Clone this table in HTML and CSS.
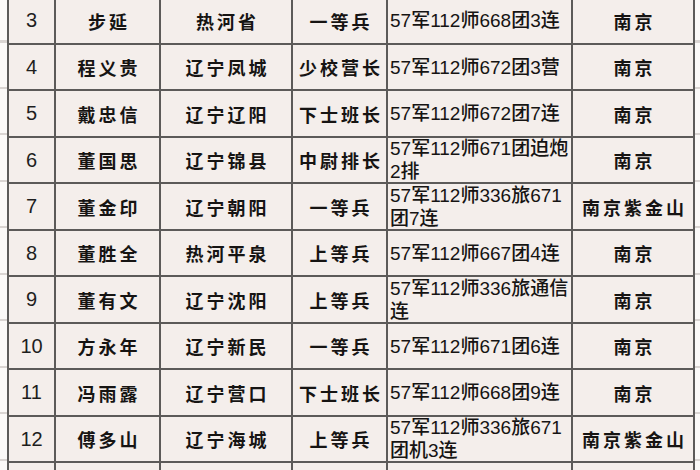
FILE: index.html
```html
<!DOCTYPE html>
<html lang="zh-CN">
<head>
<meta charset="utf-8">
<title>名单</title>
<link rel="stylesheet" href="styles.css">
</head>
<body>
<div class="sheet">
  <div class="roster">
    <div class="cell num">3</div><div class="cell">步延</div><div class="cell">热河省</div><div class="cell">一等兵</div><div class="cell unit">57军112师668团3连</div><div class="cell">南京</div>
    <div class="cell num">4</div><div class="cell">程义贵</div><div class="cell">辽宁凤城</div><div class="cell">少校营长</div><div class="cell unit">57军112师672团3营</div><div class="cell">南京</div>
    <div class="cell num">5</div><div class="cell">戴忠信</div><div class="cell">辽宁辽阳</div><div class="cell">下士班长</div><div class="cell unit">57军112师672团7连</div><div class="cell">南京</div>
    <div class="cell num">6</div><div class="cell">董国思</div><div class="cell">辽宁锦县</div><div class="cell">中尉排长</div><div class="cell unit">57军112师671团迫炮<br>2排</div><div class="cell">南京</div>
    <div class="cell num">7</div><div class="cell">董金印</div><div class="cell">辽宁朝阳</div><div class="cell">一等兵</div><div class="cell unit">57军112师336旅671<br>团7连</div><div class="cell">南京紫金山</div>
    <div class="cell num">8</div><div class="cell">董胜全</div><div class="cell">热河平泉</div><div class="cell">上等兵</div><div class="cell unit">57军112师667团4连</div><div class="cell">南京</div>
    <div class="cell num">9</div><div class="cell">董有文</div><div class="cell">辽宁沈阳</div><div class="cell">上等兵</div><div class="cell unit">57军112师336旅通信<br>连</div><div class="cell">南京</div>
    <div class="cell num">10</div><div class="cell">方永年</div><div class="cell">辽宁新民</div><div class="cell">一等兵</div><div class="cell unit">57军112师671团6连</div><div class="cell">南京</div>
    <div class="cell num">11</div><div class="cell">冯雨露</div><div class="cell">辽宁营口</div><div class="cell">下士班长</div><div class="cell unit">57军112师668团9连</div><div class="cell">南京</div>
    <div class="cell num">12</div><div class="cell">傅多山</div><div class="cell">辽宁海城</div><div class="cell">上等兵</div><div class="cell unit">57军112师336旅671<br>团机3连</div><div class="cell">南京紫金山</div>
    <div class="cell num"></div><div class="cell"></div><div class="cell"></div><div class="cell"></div><div class="cell unit"></div><div class="cell"></div>
  </div>
</div>
</body>
</html>
```
FILE: styles.css
```css
html, body {
  margin: 0;
  padding: 0;
}
body {
  width: 700px;
  height: 470px;
  overflow: hidden;
  background-color: #fbf9f8;
  background-image: repeating-linear-gradient(to bottom,
    transparent 0px, transparent 42.5px, #d9d4d2 42.5px, #d9d4d2 44.5px, transparent 44.5px, transparent 46.5px);
  background-position: 0 -2px;
}
.sheet {
  margin-top: -4px;
  margin-left: 7px;
  width: 688px;
  height: 474px;
  overflow: hidden;
}
.roster {
  display: grid;
  grid-template-columns: 47px 105px 132px 95px 185px 122px;
  grid-auto-rows: 46.5px;
  border-top: 2px solid #5c5a59;
  border-left: 2px solid #5c5a59;
  background: #f4eeeb;
}
.cell {
  box-sizing: border-box;
  border-right: 2px solid #5c5a59;
  border-bottom: 2px solid #5c5a59;
  display: flex;
  align-items: center;
  justify-content: center;
  font-family: "Noto Sans CJK SC", sans-serif;
  font-size: 18px;
  font-weight: 700;
  letter-spacing: 3px;
  padding-left: 3px;
  color: #161413;
  white-space: nowrap;
  padding-top: 1px;
}
.num {
  font-family: "Liberation Sans", "Noto Sans CJK SC", sans-serif;
  font-size: 20px;
  font-weight: 400;
  letter-spacing: 0;
  padding-left: 0;
  color: #1e1e1e;
}
.unit {
  justify-content: flex-start;
  padding-left: 2px;
  font-family: "Liberation Sans", "Noto Sans CJK SC", sans-serif;
  font-size: 19px;
  font-weight: 500;
  letter-spacing: 0;
  line-height: 23px;
  text-align: left;
}
```
